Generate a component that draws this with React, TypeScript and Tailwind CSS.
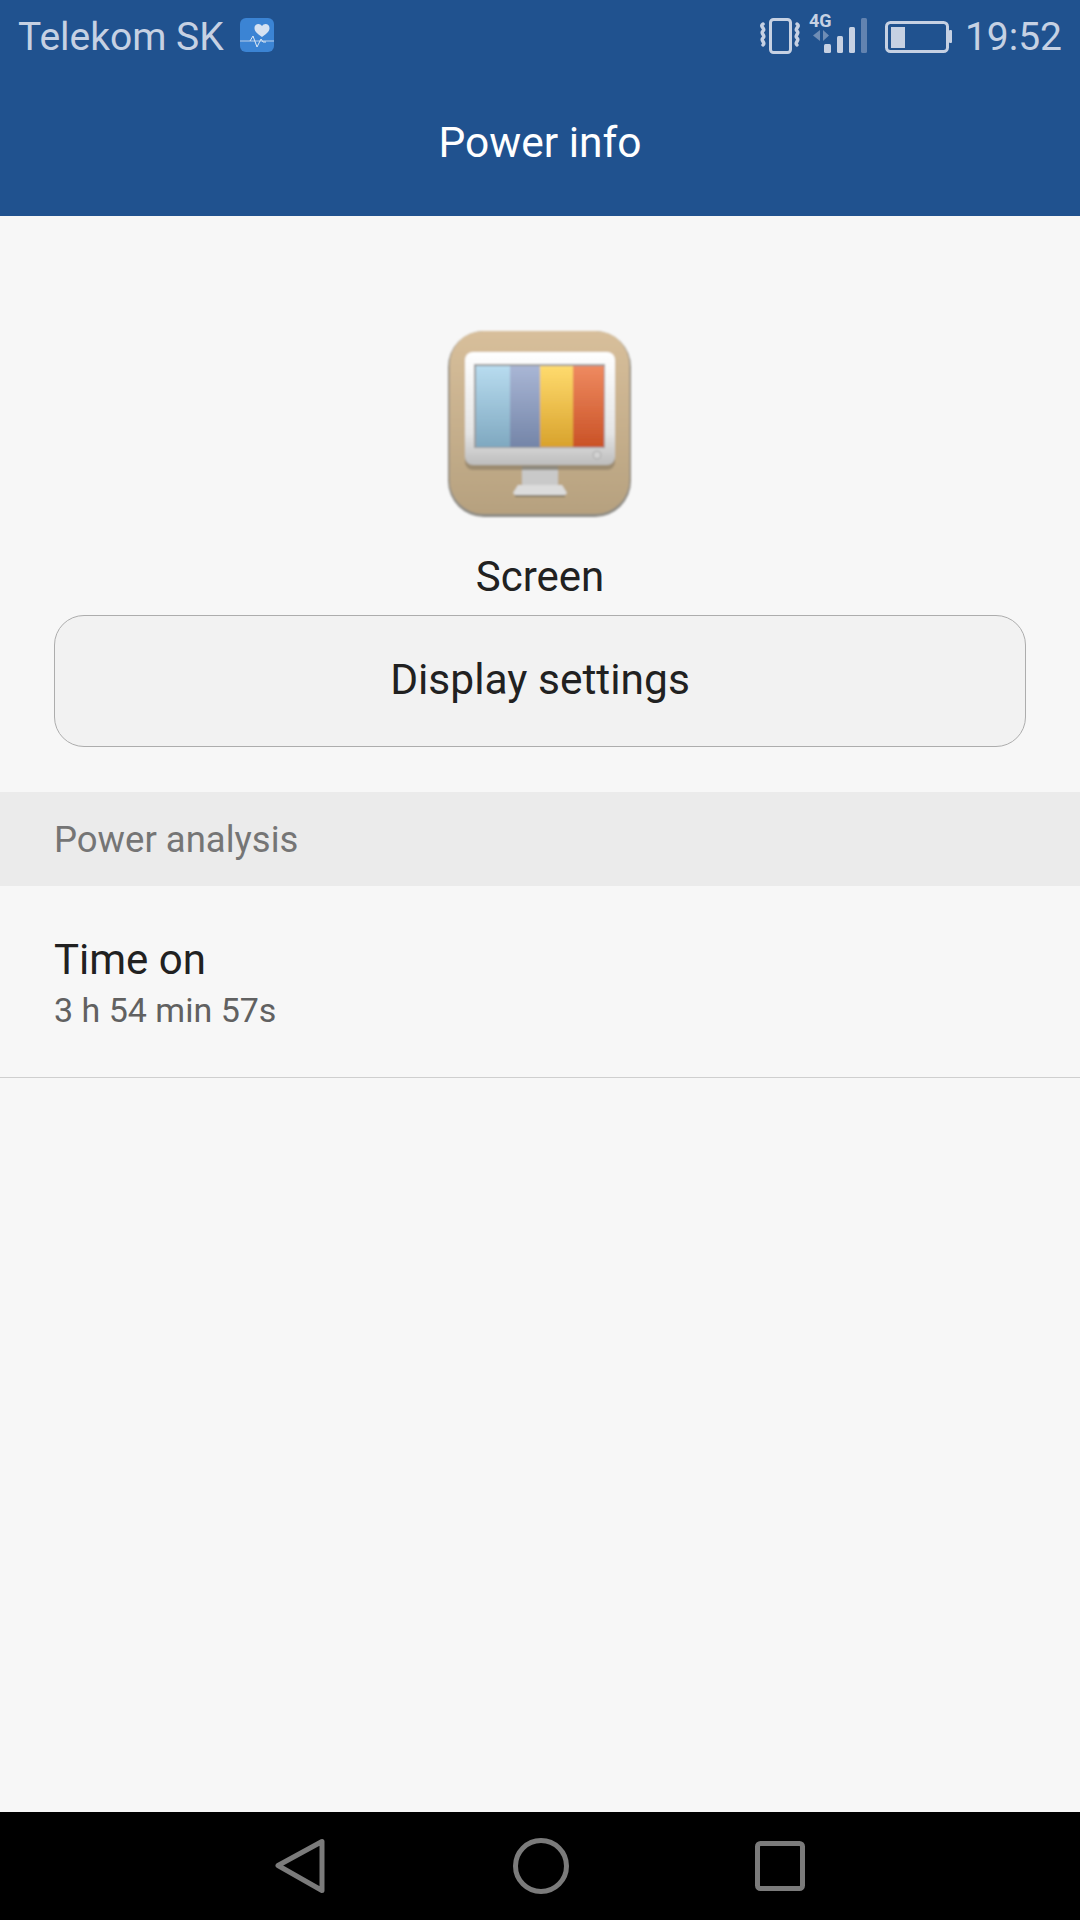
import React from 'react';

const StatusIcons: React.FC = () => (
  <svg width="214" height="70" viewBox="0 0 214 70" fill="none">
    <rect x="29.5" y="19.5" width="20" height="33" rx="3" stroke="#c6d1e3" strokeWidth="3" />
    <path d="M22 24c-4 2.500 3 4.500 0 7s3 4.500 0 7 3 4.500 0 7" stroke="#c6d1e3" strokeWidth="3.500" strokeLinecap="round" />
    <path d="M56 24c4 2.500-3 4.500 0 7s-3 4.500 0 7-3 4.500 0 7" stroke="#c6d1e3" strokeWidth="3.500" strokeLinecap="round" />
    <text x="68" y="27" fill="#c6d1e3" fontFamily="Roboto, sans-serif" fontWeight="700" fontSize="18">4G</text>
    <path d="M79 30v11l-7-5.500z" fill="#6f8db5" />
    <path d="M82 30v11l6-5.500z" fill="#6f8db5" />
    <rect x="83" y="44" width="7" height="9" rx="1.500" fill="#c6d1e3" />
    <rect x="96" y="36" width="6" height="17" rx="1.500" fill="#c6d1e3" />
    <rect x="108" y="27" width="6" height="26" rx="1.500" fill="#c6d1e3" />
    <rect x="120" y="18" width="6" height="35" rx="1.500" fill="#6283b0" />
    <rect x="145.500" y="22.500" width="61" height="29" rx="4" stroke="#c6d1e3" strokeWidth="3" />
    <rect x="150" y="27" width="14" height="21" fill="#c6d1e3" />
    <rect x="208" y="30" width="3" height="13" rx="1" fill="#c6d1e3" />
  </svg>
);

const HealthIcon: React.FC = () => (
  <svg width="34" height="34" viewBox="0 0 34 34">
    <rect width="34" height="34" rx="6" fill="#3b84d4" />
    <path d="M0 23h34" stroke="#8fb6e3" strokeWidth="1.500" />
    <path d="M10 23l3-5 4 11 4-8 2 3h3" fill="none" stroke="#dce8f5" strokeWidth="1" />
    <path d="M22 19c-6-4-7.500-6.500-7.500-9 0-4.500 5.500-5.500 7.500-2 2-3.500 7.500-2.500 7.500 2 0 2.500-1.500 5-7.500 9z" fill="#d5e2f2" />
  </svg>
);

const ScreenIcon: React.FC = () => (
  <svg width="220" height="200" viewBox="0 0 220 200">
    <defs>
      <linearGradient id="tan" x1="0" y1="0" x2="0" y2="1">
        <stop offset="0" stopColor="#d8bf9b" />
        <stop offset="1" stopColor="#b6a17f" />
      </linearGradient>
      <linearGradient id="s1" x1="0" y1="0" x2="0" y2="1">
        <stop offset="0" stopColor="#b8dcef" />
        <stop offset="1" stopColor="#7fa8c0" />
      </linearGradient>
      <linearGradient id="s2" x1="0" y1="0" x2="0" y2="1">
        <stop offset="0" stopColor="#a9b6d5" />
        <stop offset="1" stopColor="#7485a8" />
      </linearGradient>
      <linearGradient id="s3" x1="0" y1="0" x2="0" y2="1">
        <stop offset="0" stopColor="#ffdb6e" />
        <stop offset="1" stopColor="#d8a22c" />
      </linearGradient>
      <linearGradient id="s4" x1="0" y1="0" x2="0" y2="1">
        <stop offset="0" stopColor="#ee8a60" />
        <stop offset="1" stopColor="#ca5226" />
      </linearGradient>
      <linearGradient id="bezel" x1="0" y1="0" x2="0" y2="1">
        <stop offset="0" stopColor="#ffffff" />
        <stop offset="0.72" stopColor="#e4e4e4" />
        <stop offset="1" stopColor="#bdbdbd" />
      </linearGradient>
      <filter id="soft" x="-10%" y="-10%" width="120%" height="120%">
        <feGaussianBlur stdDeviation="1.1" />
      </filter>
    </defs>
    <g filter="url(#soft)">
      <rect x="18" y="11" width="183" height="186" rx="36" fill="#8c8a84" />
      <rect x="19.500" y="11" width="180" height="183" rx="34" fill="url(#tan)" />
      <rect x="35" y="36" width="150" height="114" rx="8" fill="#7f735f" opacity="0.55" />
      <rect x="35" y="32" width="150" height="113" rx="8" fill="url(#bezel)" />
      <rect x="44" y="44" width="131" height="84" fill="#9a9a9a" />
      <rect x="46" y="46" width="34" height="81" fill="url(#s1)" />
      <rect x="80" y="46" width="30" height="81" fill="url(#s2)" />
      <rect x="110" y="46" width="33" height="81" fill="url(#s3)" />
      <rect x="143" y="46" width="31" height="81" fill="url(#s4)" />
      <circle cx="167" cy="135" r="4" fill="#d2d2d2" stroke="#a9a9a9" />
      <path d="M92 146h36v19H92z" fill="#c9c9c9" />
      <path d="M92 146h36v4H92z" fill="#8e8a80" />
      <path d="M88 165h44l5 8-2 2H85l-2-2z" fill="#dcdcdc" />
      <path d="M85 175h50v2H85z" fill="#857a66" />
    </g>
  </svg>
);

const App: React.FC = () => {
  return (
    <div className="flex flex-col w-[1080px] h-[1920px] bg-[#f7f7f7] overflow-hidden font-['Roboto',sans-serif]">
      <div className="h-[216px] bg-[#20528f] flex flex-col shrink-0">
        <div className="h-[70px] flex items-center justify-between pl-[18px] pr-[18px]">
          <div className="flex items-center gap-[16px]">
            <span className="text-[39px] leading-[70px] text-[#c6d1e3] pt-[3px]">Telekom SK</span>
            <HealthIcon />
          </div>
          <div className="flex items-center gap-[10px]">
            <StatusIcons />
            <span className="text-[39px] leading-[70px] text-[#c6d1e3] pt-[3px]">19:52</span>
          </div>
        </div>
        <div className="flex-1 flex items-center justify-center">
          <h1 className="text-[42.5px] text-white font-normal">Power info</h1>
        </div>
      </div>

      <div className="flex-1 flex flex-col">
        <div className="flex justify-center mt-[104px]">
          <ScreenIcon />
        </div>
        <div className="text-center text-[42px] leading-[56px] text-[#212121] mt-[29px]">Screen</div>
        <div className="mx-[54px] mt-[10px] h-[132px] rounded-[30px] border border-[#adadad] bg-[#f2f2f2] flex items-center justify-center text-[42.5px] text-[#212121] pb-[3px]">
          Display settings
        </div>
        <div className="mt-[45px] h-[94px] bg-[#ebebeb] flex items-center px-[54px] pt-[3px] text-[36.5px] text-[#757575]">
          Power analysis
        </div>
        <div className="h-[192px] border-b border-[#cfcfcf] px-[54px] flex flex-col justify-center pt-[5px]">
          <div className="text-[42px] leading-[52px] text-[#212121]">Time on</div>
          <div className="text-[34px] leading-[48px] text-[#616161]">3 h 54 min 57s</div>
        </div>
      </div>

      <div className="h-[108px] bg-black flex items-center justify-center shrink-0 gap-[186px]">
        <svg width="52" height="56" viewBox="0 0 52 56" fill="none">
          <path d="M47 3.500v49L3 27.500z" stroke="#7b7b7b" strokeWidth="5" strokeLinejoin="round" />
        </svg>
        <svg width="56" height="56" viewBox="0 0 56 56" fill="none">
          <circle cx="28" cy="28" r="25.500" stroke="#7b7b7b" strokeWidth="5" />
        </svg>
        <svg width="50" height="50" viewBox="0 0 50 50" fill="none">
          <rect x="2.500" y="2.500" width="45" height="45" rx="3" stroke="#7b7b7b" strokeWidth="5" />
        </svg>
      </div>
    </div>
  );
};

export default App;
